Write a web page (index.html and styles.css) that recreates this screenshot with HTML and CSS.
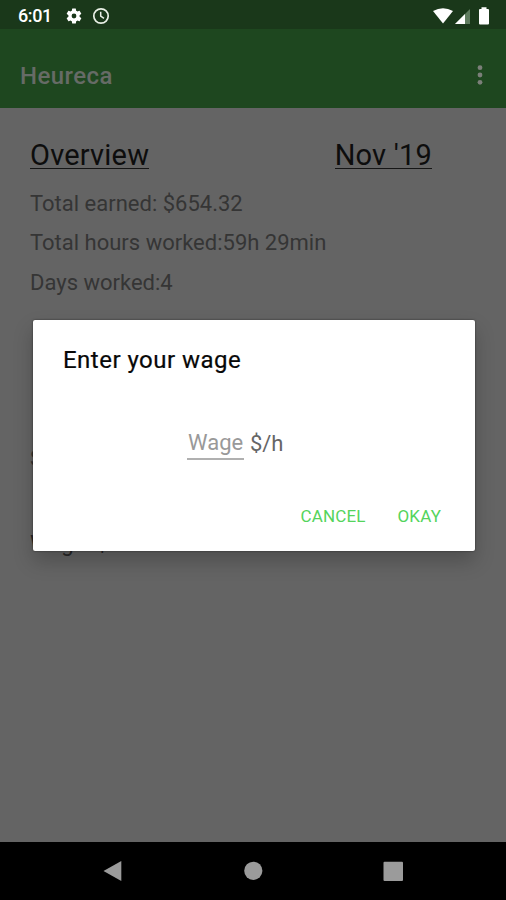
FILE: index.html
```
<!DOCTYPE html>
<html lang="en">
<head>
<meta charset="utf-8">
<title>Heureca</title>
<link rel="stylesheet" href="styles.css">
</head>
<body>
<div class="screen">
  <header class="status">
    <span class="clock">6:01</span>
    <svg class="gear" width="18" height="18" viewBox="0 0 24 24"><path fill="#fff" fill-rule="evenodd" d="M19.4 13c.04-.3.06-.65.06-1s-.02-.7-.06-1l2.1-1.65a.5.5 0 0 0 .12-.64l-2-3.46a.5.5 0 0 0-.6-.22l-2.5 1a7.300 7.300 0 0 0-1.690-.980l-.380-2.650A.49.49 0 0 0 14 2h-4a.49.49 0 0 0-.49.420l-.380 2.650c-.61.250-1.170.590-1.690.980l-2.490-1a.5.5 0 0 0-.61.220l-2 3.460a.5.5 0 0 0 .12.640L4.570 11a7.900 7.900 0 0 0 0 2l-2.110 1.650a.5.5 0 0 0-.12.640l2 3.460c.12.220.39.300.61.220l2.490-1c.52.400 1.080.730 1.690.980l.380 2.650c.03.240.24.400.49.400h4c.25 0 .46-.16.49-.4l.380-2.650c.61-.25 1.170-.59 1.690-.98l2.490 1c.23.080.49 0 .61-.22l2-3.460a.5.5 0 0 0-.12-.64zM12 15.200a3.200 3.200 0 1 1 0-6.400 3.200 3.200 0 0 1 0 6.400z"/></svg>
    <svg class="alarm" width="18" height="18" viewBox="0 0 18 18"><circle cx="9" cy="9" r="7.200" fill="none" stroke="#e9f0e6" stroke-width="1.700"/><path d="M8.700 4.700V9.200L12 11.400" fill="none" stroke="#e9f0e6" stroke-width="1.500"/></svg>
    <svg class="signals" width="58" height="20" viewBox="0 0 58 20"><path d="M0 5Q10-.500 20 5L10 17.500z" fill="#fff"/><path d="M37 3V18H22z" fill="#5f7c5f"/><path d="M32 8V18H22z" fill="#fff"/><path d="M48.500 1.300h5v1.700h1.500q1 0 1 1V17.500q0 1-1 1h-8q-1 0-1-1V4q0-1 1-1h1.500z" fill="#fff"/></svg>
  </header>
  <div class="toolbar">
    <h1 class="app-name">Heureca</h1>
    <svg class="more" width="6" height="22" viewBox="0 0 6 22"><g fill="#7b7f79"><circle cx="3" cy="3.700" r="2.400"/><circle cx="3" cy="11" r="2.400"/><circle cx="3" cy="18.300" r="2.400"/></g></svg>
  </div>
  <main class="content">
    <div class="heading">
      <h2 class="overview">Overview</h2>
      <h2 class="month">Nov '19</h2>
    </div>
    <p class="row earned">Total earned: $654.32</p>
    <p class="row hours">Total hours worked:59h 29min</p>
    <p class="row days">Days worked:4</p>
    <p class="row settings">S</p>
    <p class="row wage-row">Wage: $</p>
    <section class="dialog">
      <h3 class="title">Enter your wage</h3>
      <div class="field"><span class="hint">Wage</span><span class="unit">$/h</span></div>
      <div class="actions"><span class="cancel">CANCEL</span><span class="okay">OKAY</span></div>
    </section>
  </main>
  <nav class="nav">
    <svg width="20" height="22" viewBox="0 0 20 22"><path d="M18.300 1V21L.5 11z" fill="#9b9b9b"/></svg>
    <svg width="20" height="22" viewBox="0 0 20 22"><circle cx="10.300" cy="10.800" r="9.100" fill="#9b9b9b"/></svg>
    <svg width="20" height="22" viewBox="0 0 20 22"><rect x=".5" y="1.700" width="19.500" height="19.300" rx="1" fill="#9b9b9b"/></svg>
  </nav>
</div>
</body>
</html>
```

FILE: styles.css
```
* { box-sizing: border-box; }
body, h1, h2, h3, p { margin: 0; }
body { font-family: Roboto, sans-serif; background: #646464; }
.screen { width: 506px; height: 900px; display: flex; flex-direction: column; overflow: hidden; }
.status { height: 29px; background: #1a381a; display: flex; align-items: center; padding: 2px 15px 0 18px; }
.clock { color: #fff; font-size: 18px; font-weight: 500; line-height: 26px; width: 47px; letter-spacing: -.4px; white-space: nowrap; }
.alarm { margin-left: 9px; }
.signals { margin-left: auto; }
.toolbar { height: 79px; background: #1e471f; display: flex; align-items: center; justify-content: space-between; padding: 10px 23px 0 20px; }
.app-name { font-size: 24px; font-weight: 500; line-height: 28px; letter-spacing: .45px; color: #666b66; padding-top: 5px; }
.more { margin-top: 2px; }
.content { position: relative; height: 734px; background: #646464; padding: 28px 30px 0; }
.heading { display: flex; justify-content: space-between; width: 402px; height: 48px; }
.overview, .month { font-size: 29px; font-weight: 400; line-height: 39px; height: 33px; color: #0d0d0d; border-bottom: 1px solid #161616; white-space: nowrap; letter-spacing: .2px; }
.row { font-size: 22px; line-height: 39.300px; color: #353535; white-space: nowrap; width: max-content; }
.settings { margin-top: 137px; }
.wage-row { margin-top: 46px; color: #282828; }
.dialog { position: absolute; left: 33px; top: 212px; width: 441.500px; height: 230.500px; background: #fff; border-radius: 2px; box-shadow: 0 0 2px rgba(0,0,0,.6), 0 10px 20px rgba(0,0,0,.22); padding: 24px 33.500px 0 30px; }
.title { font-size: 24px; font-weight: 400; line-height: 33px; letter-spacing: .48px; color: #080808; -webkit-text-stroke: .2px #080808; width: max-content; }
.field { display: flex; margin: 48px 0 0 124px; font-size: 22px; line-height: 35px; }
.hint { width: 57px; height: 35px; padding-left: 1px; color: #999; border-bottom: 2px solid #b0b0b0; }
.unit { margin-left: 6px; color: #666; letter-spacing: -.1px; line-height: 37px; }
.actions { display: flex; justify-content: flex-end; gap: 32px; margin-top: 42px; font-size: 17px; line-height: 24px; letter-spacing: .15px; color: #54d45c; }
.nav { height: 58px; background: #000; display: flex; justify-content: space-between; padding: 18px 103px 0; }
```
